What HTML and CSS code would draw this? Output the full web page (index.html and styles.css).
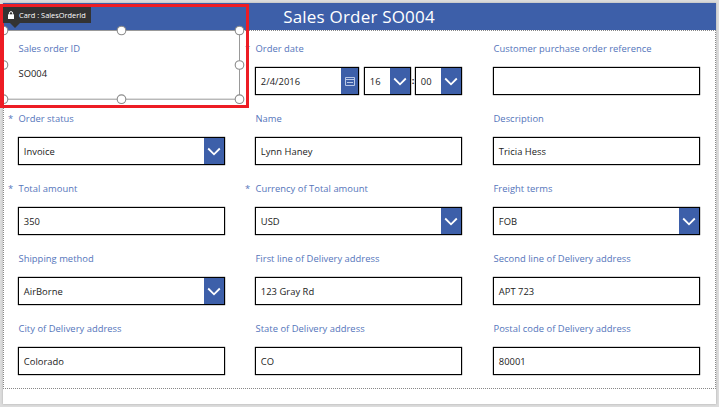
FILE: index.html
```html
<!DOCTYPE html>
<html lang="en">
<head>
<meta charset="utf-8">
<title>Sales Order</title>
<link rel="stylesheet" href="styles.css">
</head>
<body>
<main class="screen">
  <header class="header"><h1>Sales Order SO004</h1></header>
  <section class="form">
    <div class="card"><div class="label">Sales order ID</div><div class="plain">SO004</div></div>
    <div class="card"><div class="label required">Order date</div>
      <div class="datetime">
        <div class="box date"><span>2/4/2016</span><i class="btn small"><svg width="10" height="9" viewBox="0 0 10 9"><path d="M.5.5h9v8h-9zM.5 2.5h9M2 5.5h6" /></svg></i></div>
        <div class="box time"><span>16</span><i class="btn"><svg width="14" height="9" viewBox="0 0 14 9"><path class="chev" d="M1.2 1.5 7 7.3l5.8-5.8"/></svg></i></div>
        <b class="colon">:</b>
        <div class="box time"><span>00</span><i class="btn"><svg width="14" height="9" viewBox="0 0 14 9"><path class="chev" d="M1.2 1.5 7 7.3l5.8-5.8"/></svg></i></div>
      </div></div>
    <div class="card"><div class="label">Customer purchase order reference</div><div class="box"></div></div>

    <div class="card"><div class="label required">Order status</div><div class="box"><span>Invoice</span><i class="btn"><svg width="14" height="9" viewBox="0 0 14 9"><path class="chev" d="M1.2 1.5 7 7.3l5.8-5.8"/></svg></i></div></div>
    <div class="card"><div class="label">Name</div><div class="box"><span>Lynn Haney</span></div></div>
    <div class="card"><div class="label">Description</div><div class="box"><span>Tricia Hess</span></div></div>

    <div class="card"><div class="label required">Total amount</div><div class="box"><span>350</span></div></div>
    <div class="card"><div class="label required">Currency of Total amount</div><div class="box"><span>USD</span><i class="btn"><svg width="14" height="9" viewBox="0 0 14 9"><path class="chev" d="M1.2 1.5 7 7.3l5.8-5.8"/></svg></i></div></div>
    <div class="card"><div class="label">Freight terms</div><div class="box"><span>FOB</span><i class="btn"><svg width="14" height="9" viewBox="0 0 14 9"><path class="chev" d="M1.2 1.5 7 7.3l5.8-5.8"/></svg></i></div></div>

    <div class="card"><div class="label">Shipping method</div><div class="box"><span>AirBorne</span><i class="btn"><svg width="14" height="9" viewBox="0 0 14 9"><path class="chev" d="M1.2 1.5 7 7.3l5.8-5.8"/></svg></i></div></div>
    <div class="card"><div class="label">First line of Delivery address</div><div class="box"><span>123 Gray Rd</span></div></div>
    <div class="card"><div class="label">Second line of Delivery address</div><div class="box"><span>APT 723</span></div></div>

    <div class="card"><div class="label">City of Delivery address</div><div class="box"><span>Colorado</span></div></div>
    <div class="card"><div class="label">State of Delivery address</div><div class="box"><span>CO</span></div></div>
    <div class="card"><div class="label">Postal code of Delivery address</div><div class="box"><span>80001</span></div></div>
  </section>
</main>
<svg class="selection" width="250" height="110" viewBox="0 0 250 110">
  <path class="edge-dash" d="M3.5 30.5V99"/>
  <path class="edge" d="M3.5 30.5h236v68.7h-236"/>
  <g class="handles">
    <circle cx="3.5" cy="30.5" r="4.3"/><circle cx="121.5" cy="30.5" r="4.3"/><circle cx="239.5" cy="30.5" r="4.3"/>
    <circle cx="3.5" cy="65" r="4.3"/><circle cx="239.5" cy="65" r="4.3"/>
    <circle cx="3.5" cy="99.2" r="4.3"/><circle cx="121.5" cy="99.2" r="4.3"/><circle cx="239.5" cy="99.2" r="4.3"/>
  </g>
</svg>
<div class="callout"></div>
<div class="tag">
  <svg width="6" height="8" viewBox="0 0 6 8"><path d="M0 3.3h6V8H0z"/><path class="shackle" d="M1.4 3.6V2.2a1.6 1.6 0 0 1 3.2 0v1.4"/></svg>
  <span>Card : SalesOrderId</span>
</div>
</body>
</html>
```
FILE: styles.css
```css
* { box-sizing: border-box; }
body {
  margin: 0;
  height: 407px;
  overflow: hidden;
  padding: 3px 0 0 3px;
  background: #dcdcdc;
  font-family: "Open Sans", "Noto Sans", sans-serif;
  font-size: 9.4px;
  color: #222;
}
.screen {
  width: 713px;
  height: 401px;
  background: #fff;
  box-shadow: 0 0 2px #aaa;
}
.header {
  height: 27px;
  background: #3d5fa9;
  display: flex;
  align-items: center;
  justify-content: center;
}
.header h1 {
  margin: 0;
  padding-right: 1px;
  font-size: 17px;
  line-height: 27px;
  font-weight: 400;
  letter-spacing: .2px;
  color: #fff;
}
.form {
  height: 359px;
  border: 1px dotted #888;
  padding: 0 0 0 14px;
  display: grid;
  grid-template-columns: 237px 238px 207px;
  grid-template-rows: repeat(5, 70px);
}
.card { padding-top: 10px; }
.label {
  position: relative;
  height: 16px;
  padding-left: .5px;
  line-height: 16px;
  letter-spacing: .03px;
  color: #5575bb;
  white-space: nowrap;
}
.required::before {
  content: "*";
  position: absolute;
  left: -10px;
}
.plain { height: 28px; margin-top: 6px; line-height: 10px; padding: 6px 0 0 .5px; }
.box {
  width: 207px;
  height: 28px;
  margin-top: 10px;
  border: 1px solid #000;
  box-shadow: 0 0 1px #000;
  display: flex;
  justify-content: space-between;
  background: #fff;
}
.box span { padding-left: 4.8px; line-height: 28px; letter-spacing: .03px; white-space: nowrap; }
.btn {
  width: 20.5px;
  background: #3d5fa9;
  display: flex;
  align-items: center;
  justify-content: center;
}
.btn svg { fill: none; stroke: #b9c8e6; stroke-width: 1; }
.btn .chev { stroke: #fff; stroke-width: 1.8; }
.btn.small { width: 17px; }
.datetime { display: flex; }
.date { width: 104px; margin-right: 5px; }
.time { width: 47px; }
.colon { width: 4px; margin-top: 10px; line-height: 27px; text-align: center; }
.selection { position: absolute; left: 0; top: 0; }
.edge { fill: none; stroke: #999; }
.edge-dash { fill: none; stroke: #999; stroke-dasharray: 1 1; }
.handles { fill: #fff; stroke: #8c8c8c; stroke-width: 1.1; }
.callout {
  position: absolute;
  left: 0;
  top: 4px;
  width: 249px;
  height: 104px;
  border: 3px solid #ed1c24;
  border-left-width: 4px;
}
.tag {
  position: absolute;
  left: 3px;
  top: 7px;
  width: 88px;
  height: 16px;
  padding-left: 5px;
  display: flex;
  align-items: center;
  gap: 5px;
  background: #333;
  color: #fff;
  font-size: 7.4px;
  white-space: nowrap;
}
.tag::after {
  content: "";
  position: absolute;
  left: 7px;
  top: 16px;
  border: 5.5px solid transparent;
  border-top-color: #333;
  border-bottom: 0;
}
.tag svg { fill: #fff; }
.shackle { fill: none; stroke: #fff; }
```
